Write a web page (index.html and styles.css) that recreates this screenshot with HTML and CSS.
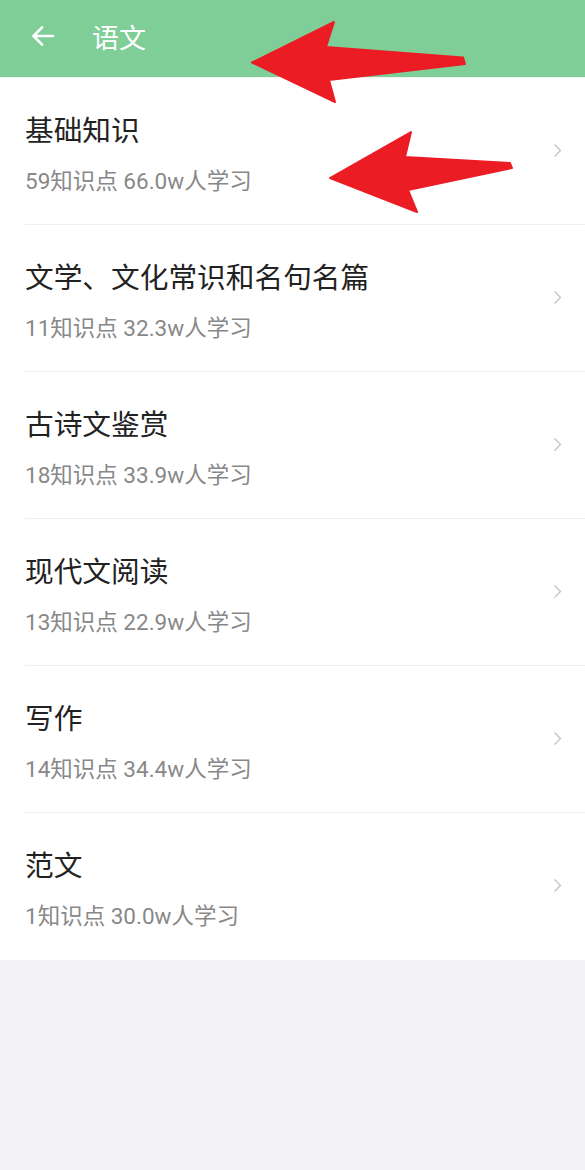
FILE: index.html
```html
<!DOCTYPE html>
<html lang="zh-CN">
<head>
    <meta charset="UTF-8">
    <meta name="viewport" content="width=device-width, initial-scale=1.0">
    <title>语文</title>
    <link rel="stylesheet" href="styles.css">
</head>
<body>
    <div class="page">
        <!-- Top bar -->
        <div class="topbar">
            <svg class="back" width="24" height="22" viewBox="0 0 24 22">
                <path d="M22 11H3M11 2.5L2.5 11l8.5 8.5" fill="none" stroke="#fff" stroke-width="2.6" stroke-linecap="round" stroke-linejoin="round"/>
            </svg>
            <span class="topbar-title">语文</span>
        </div>

        <!-- Chapter list -->
        <ul class="list">
            <li class="item">
                <div class="item-text">
                    <div class="item-title">基础知识</div>
                    <div class="item-sub">59知识点 66.0w人学习</div>
                </div>
                <svg class="chevron" width="9" height="15" viewBox="0 0 9 15"><path d="M1.5 1.5l6 6-6 6" fill="none" stroke="#c4c4c4" stroke-width="1.4"/></svg>
            </li>
            <li class="item">
                <div class="item-text">
                    <div class="item-title">文学、文化常识和名句名篇</div>
                    <div class="item-sub">11知识点 32.3w人学习</div>
                </div>
                <svg class="chevron" width="9" height="15" viewBox="0 0 9 15"><path d="M1.5 1.5l6 6-6 6" fill="none" stroke="#c4c4c4" stroke-width="1.4"/></svg>
            </li>
            <li class="item">
                <div class="item-text">
                    <div class="item-title">古诗文鉴赏</div>
                    <div class="item-sub">18知识点 33.9w人学习</div>
                </div>
                <svg class="chevron" width="9" height="15" viewBox="0 0 9 15"><path d="M1.5 1.5l6 6-6 6" fill="none" stroke="#c4c4c4" stroke-width="1.4"/></svg>
            </li>
            <li class="item">
                <div class="item-text">
                    <div class="item-title">现代文阅读</div>
                    <div class="item-sub">13知识点 22.9w人学习</div>
                </div>
                <svg class="chevron" width="9" height="15" viewBox="0 0 9 15"><path d="M1.5 1.5l6 6-6 6" fill="none" stroke="#c4c4c4" stroke-width="1.4"/></svg>
            </li>
            <li class="item">
                <div class="item-text">
                    <div class="item-title">写作</div>
                    <div class="item-sub">14知识点 34.4w人学习</div>
                </div>
                <svg class="chevron" width="9" height="15" viewBox="0 0 9 15"><path d="M1.5 1.5l6 6-6 6" fill="none" stroke="#c4c4c4" stroke-width="1.4"/></svg>
            </li>
            <li class="item last">
                <div class="item-text">
                    <div class="item-title">范文</div>
                    <div class="item-sub">1知识点 30.0w人学习</div>
                </div>
                <svg class="chevron" width="9" height="15" viewBox="0 0 9 15"><path d="M1.5 1.5l6 6-6 6" fill="none" stroke="#c4c4c4" stroke-width="1.4"/></svg>
            </li>
        </ul>

        <!-- Red annotation arrows drawn over the screenshot -->
        <svg class="marks" width="585" height="230" viewBox="0 0 585 230">
            <polygon points="252,62.5 334,22 326,47 463,57.5 465,64 329,80 335,102" fill="#ec1c24" stroke="#ec1c24" stroke-width="2" stroke-linejoin="round"/>
            <polygon points="330,178 411,132 405,157 510,163 512,168 408,190 417,212" fill="#ec1c24" stroke="#ec1c24" stroke-width="2" stroke-linejoin="round"/>
        </svg>
    </div>
</body>
</html>
```

FILE: styles.css
```css
/* Basic styling */
body {
    margin: 0;
    padding: 0;
    background-color: #f4f4f6;
    font-family: Roboto, "Noto Sans CJK SC", sans-serif;
}

.page {
    position: relative;
    min-height: 1170px;
}

/* Top bar */
.topbar {
    height: 77px;
    background-color: #7fcd97;
    display: flex;
    align-items: center;
    padding-left: 31px;
    padding-bottom: 4px;
    box-sizing: border-box;
}

.back {
    display: block;
    margin-top: -1px;
}

.topbar-title {
    margin-left: 37px;
    font-size: 27px;
    color: #ffffff;
}

/* List */
.list {
    list-style: none;
    margin: 0;
    padding: 0;
    background-color: #ffffff;
    border-top: 1px solid #eef3ef;
}

.item {
    display: flex;
    align-items: center;
    margin-left: 25px;
    padding-right: 23px;
    height: 147px;
    box-sizing: border-box;
    border-bottom: 1px solid #f0f0f0;
}

.item.last {
    border-bottom: none;
}

.item-text {
    flex: 1;
    padding-top: 6px;
}

.item-title {
    font-size: 28.7px;
    line-height: 36px;
    color: #222222;
}

.item-sub {
    margin-top: 17px;
    font-size: 22.5px;
    line-height: 30px;
    color: #888888;
}

.chevron {
    display: block;
    margin-top: -2px;
}

/* Annotation overlay */
.marks {
    position: absolute;
    top: 0;
    left: 0;
    pointer-events: none;
}
```
